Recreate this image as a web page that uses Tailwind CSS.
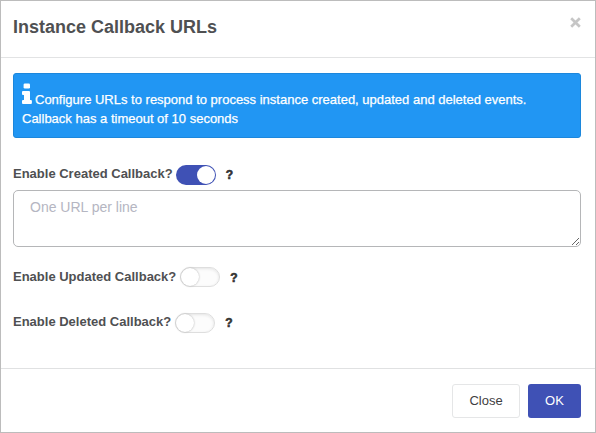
<!DOCTYPE html>
<html lang="en">
<head>
<meta charset="utf-8">
<title>Instance Callback URLs</title>
<script src="https://cdn.jsdelivr.net/npm/@tailwindcss/browser@4"></script>
</head>
<body class="bg-white">
<div class="flex h-[433px] w-[596px] flex-col overflow-hidden border border-[#bcbcbc] bg-white font-['Liberation_Sans',Arial,sans-serif] text-[13px] text-[#4f5052]">
  <header class="flex h-[57px] shrink-0 items-start justify-between border-b border-[#e2e3e4] pr-[14px] pl-3">
    <h1 class="mt-[14px] text-[18px] leading-6 font-bold whitespace-nowrap">Instance Callback URLs</h1>
    <button class="mt-4 flex size-[11px]" aria-label="Close"><svg class="size-[11px]" viewBox="0 0 11 11" fill="none" stroke="#c6c6c6" stroke-width="2.7"><path d="M1.2 1.2 9.8 9.8M9.8 1.2 1.2 9.8"/></svg></button>
  </header>
  <main class="flex h-[311px] shrink-0 flex-col border-b border-[#e0e1e2] px-3 pt-[15px] pr-[14px]">
    <div class="h-[65px] shrink-0 rounded-[3px] border border-[#1c87dc] bg-[#2196f3] px-2 pt-[9px] text-white">
      <div class="flex h-[25px] items-start gap-[3px]">
        <svg class="h-[21px] w-[10px] shrink-0" viewBox="0 0 10 21" fill="#fff"><rect x="1.600" y="0.500" width="6.400" height="5" rx="1.300"/><path d="M1 8H7Q8 8 8 9V17H8.900Q9.900 17 9.900 18V20Q9.900 21 8.900 21H1Q0 21 0 20V18Q0 17 1 17H2V12H1Q0 12 0 11V9Q0 8 1 8Z"/></svg>
        <p class="mt-2 leading-[18px] whitespace-nowrap [-webkit-text-stroke:0.25px_white]">Configure URLs to respond to process instance created, updated and deleted events.</p>
      </div>
      <p class="mt-[2px] leading-[18px] whitespace-nowrap [-webkit-text-stroke:0.25px_white]">Callback has a timeout of 10 seconds</p>
    </div>
    <div class="mt-[26px] flex h-[22px] shrink-0 items-start">
      <span class="mt-px leading-[18px] font-bold whitespace-nowrap">Enable Created Callback?</span>
      <span class="mt-px ml-[3px] flex h-5 w-10 justify-end rounded-full bg-[#3f51b5] p-px"><span class="size-[18px] rounded-full bg-white"></span></span>
      <span class="mt-[3px] ml-[10px] text-[12px] leading-4 font-bold text-[#333] [-webkit-text-stroke:0.6px_#333]">?</span>
    </div>
    <textarea class="mt-[4px] h-[57px] w-full shrink-0 resize rounded-[5px] border border-[#b5b6b8] px-4 py-[6px] text-[14px] leading-5 placeholder:text-[#b5b6c2]" placeholder="One URL per line"></textarea>
    <div class="mt-[20px] flex h-[22px] shrink-0 items-start">
      <span class="mt-px leading-[18px] font-bold whitespace-nowrap">Enable Updated Callback?</span>
      <span class="ml-[4px] flex h-5 w-10 rounded-full border border-[#dedede] bg-[#fcfcfc] shadow-[inset_0_1px_3px_#e4e4e4]"><span class="size-[18px] rounded-full bg-white shadow-[0_0_2px_#aaa]"></span></span>
      <span class="mt-[3px] ml-[10px] text-[12px] leading-4 font-bold text-[#333] [-webkit-text-stroke:0.6px_#333]">?</span>
    </div>
    <div class="mt-[24px] flex h-[22px] shrink-0 items-start">
      <span class="leading-[18px] font-bold whitespace-nowrap">Enable Deleted Callback?</span>
      <span class="ml-[4px] flex h-5 w-10 rounded-full border border-[#dedede] bg-[#fcfcfc] shadow-[inset_0_1px_3px_#e4e4e4]"><span class="size-[18px] rounded-full bg-white shadow-[0_0_2px_#aaa]"></span></span>
      <span class="mt-[2px] ml-[10px] text-[12px] leading-4 font-bold text-[#333] [-webkit-text-stroke:0.6px_#333]">?</span>
    </div>
  </main>
  <footer class="flex justify-end gap-2 pt-[15px] pr-[14px]">
    <button class="h-[34px] w-[68px] rounded-[3px] border border-[#e5e6e7] text-[#3f4042]">Close</button>
    <button class="h-[34px] w-[53px] rounded-[3px] bg-[#3f51b5] text-white">OK</button>
  </footer>
</div>
</body>
</html>
